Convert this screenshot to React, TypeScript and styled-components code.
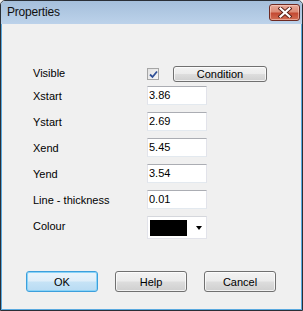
import React from 'react'
import styled, { createGlobalStyle } from 'styled-components'

const Global = createGlobalStyle`
  html, body { margin: 0; padding: 0; background: #f0f0f0; }
  * { box-sizing: border-box; }
`

const Window = styled.div`
  width: 303px;
  height: 311px;
  border: 1px solid #2a2f36;
  border-radius: 5px 5px 0 0;
  background: #f0f0f0;
  display: flex;
  flex-direction: column;
  overflow: hidden;
  font-family: "Liberation Sans", Arial, sans-serif;
`

const TitleBar = styled.div`
  height: 23px;
  flex: none;
  display: flex;
  align-items: center;
  justify-content: space-between;
  padding: 0 2px 2px 6px;
  background: linear-gradient(#a5bfdb, #bcd2ea);
`

const Title = styled.span`
  font-size: 12px;
  color: #101010;
  letter-spacing: -0.2px;
`

const CloseButton = styled.div`
  width: 31px;
  height: 17px;
  margin-top: 1px;
  border: 1px solid #6e2a22;
  border-radius: 3px;
  background: linear-gradient(#e8aa9a 0%, #dc8b76 45%, #c44a33 55%, #d26e54 100%);
  box-shadow: inset 0 0 0 1px rgba(255, 220, 210, 0.5);
  display: flex;
  align-items: center;
  justify-content: center;
`

const Client = styled.div`
  flex: 1;
  display: flex;
  flex-direction: column;
  border: 1px solid #5aa9df;
  border-top: none;
  padding: 42px 0 0 31px;
`

const Form = styled.div`
  display: grid;
  grid-template-columns: 114px 1fr;
  align-items: start;
`

const Label = styled.div<{ $top: number; $gap: number }>`
  font-size: 11px;
  line-height: 13px;
  color: #000;
  padding-top: ${p => p.$top}px;
  margin-bottom: ${p => p.$gap}px;
`

const Controls = styled.div<{ $gap: number }>`
  display: flex;
  align-items: center;
  margin-bottom: ${p => p.$gap}px;
`

const CheckBox = styled.div`
  width: 12px;
  height: 12px;
  margin-right: 14px;
  border: 1px solid #a5a5a5;
  background: linear-gradient(135deg, #e2e2e2, #f7f7f7);
  display: flex;
  align-items: center;
  justify-content: center;
`

const PushButton = styled.div<{ $w: number; $h: number; $default?: boolean }>`
  width: ${p => p.$w}px;
  height: ${p => p.$h}px;
  border: 1px solid ${p => (p.$default ? '#3c9fdc' : '#707070')};
  border-radius: 3px;
  background: ${p =>
    p.$default
      ? 'linear-gradient(#eaf4fb 0%, #dfeef9 48%, #c6e3f6 52%, #b8dbf3 100%)'
      : 'linear-gradient(#f3f3f3 0%, #ebebeb 48%, #dddddd 52%, #cfcfcf 100%)'};
  box-shadow: inset 0 0 0 1px ${p => (p.$default ? '#8ad3f7' : 'rgba(255,255,255,0.7)')};
  display: flex;
  align-items: center;
  justify-content: center;
  font-size: 11px;
  color: #000;
`

const TextBox = styled.div`
  width: 60px;
  height: 19px;
  background: #fff;
  border: 1px solid #e2e3ea;
  border-top-color: #abadb3;
  border-bottom-color: #e3e9ef;
  padding: 2px 0 0 1px;
  font-size: 11px;
  line-height: 13px;
  color: #000;
`

const ColourBox = styled.div`
  width: 60px;
  height: 23px;
  background: #fff;
  border: 1px solid #e2e3ea;
  border-top-color: #d5d7dc;
  display: flex;
  align-items: center;
  padding-left: 2px;
`

const Swatch = styled.div<{ $colour: string }>`
  width: 37px;
  height: 16px;
  background: ${p => p.$colour};
`

const Arrow = styled.div`
  margin-left: 9px;
  width: 0;
  height: 0;
  border-left: 3.5px solid transparent;
  border-right: 3.5px solid transparent;
  border-top: 4px solid #000;
  margin-top: 1px;
`

const ButtonRow = styled.div`
  display: flex;
  gap: 17px;
  margin: 32px 0 0 -7px;
`

const rows = [
  { label: 'Xstart', value: '3.86' },
  { label: 'Ystart', value: '2.69' },
  { label: 'Xend', value: '5.45' },
  { label: 'Yend', value: '3.54' },
  { label: 'Line - thickness', value: '0.01' },
]

export default function App() {
  return (
    <>
      <Global />
      <Window>
        <TitleBar>
          <Title>Properties</Title>
          <CloseButton>
            <svg width="14" height="11" viewBox="0 0 14 11">
              <path d="M2.5 1.5 L11.5 9.5 M11.5 1.5 L2.5 9.5" stroke="#5a2018" strokeWidth="4" strokeLinecap="square" />
              <path d="M2.5 1.5 L11.5 9.5 M11.5 1.5 L2.5 9.5" stroke="#ffffff" strokeWidth="2.2" strokeLinecap="square" />
            </svg>
          </CloseButton>
        </TitleBar>
        <Client>
          <Form>
            <Label $top={1} $gap={4}>Visible</Label>
            <Controls $gap={4}>
              <CheckBox>
                <svg width="9" height="9" viewBox="0 0 9 9">
                  <path d="M1 4.5 L3.5 7 L8 1.5" fill="none" stroke="#2f4f96" strokeWidth="1.8" />
                </svg>
              </CheckBox>
              <PushButton $w={94} $h={16}>Condition</PushButton>
            </Controls>
            {rows.map(r => (
              <React.Fragment key={r.label}>
                <Label $top={4} $gap={7}>{r.label}</Label>
                <Controls $gap={7}>
                  <TextBox>{r.value}</TextBox>
                </Controls>
              </React.Fragment>
            ))}
            <Label $top={4} $gap={0}>Colour</Label>
            <Controls $gap={0}>
              <ColourBox>
                <Swatch $colour="#000" />
                <Arrow />
              </ColourBox>
            </Controls>
          </Form>
          <ButtonRow>
            <PushButton $w={72} $h={21} $default>OK</PushButton>
            <PushButton $w={72} $h={21}>Help</PushButton>
            <PushButton $w={72} $h={21}>Cancel</PushButton>
          </ButtonRow>
        </Client>
      </Window>
    </>
  )
}
